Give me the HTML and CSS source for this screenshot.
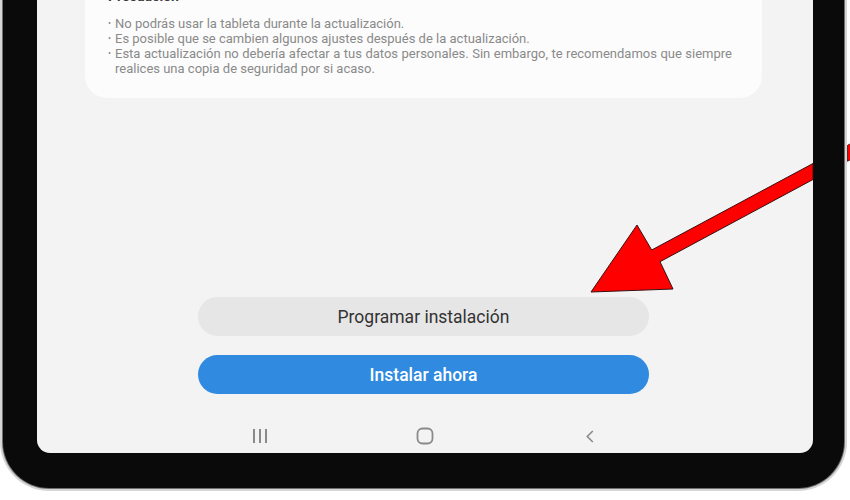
FILE: index.html
```html
<!DOCTYPE html>
<html lang="es">
<head>
<meta charset="utf-8">
<title>Actualización de software</title>
<link rel="stylesheet" href="styles.css">
</head>
<body>
<div class="device">
  <div class="screen">
    <div class="card">
      <div class="card-title">Precaución</div>
      <ul class="notes">
        <li><span>No podrás usar la tableta durante la actualización.</span></li>
        <li><span>Es posible que se cambien algunos ajustes después de la actualización.</span></li>
        <li><span>Esta actualización no debería afectar a tus datos personales. Sin embargo, te recomendamos que siempre realices una copia de seguridad por si acaso.</span></li>
      </ul>
    </div>
    <div class="actions">
      <button class="btn btn-secondary">Programar instalación</button>
      <button class="btn btn-primary">Instalar ahora</button>
    </div>
    <nav class="navbar">
      <span class="nav-item">
        <svg width="16" height="16" viewBox="0 0 16 16"><rect x="1" y="1" width="2" height="14" fill="#8a8a8a"/><rect x="7" y="1" width="2" height="14" fill="#8a8a8a"/><rect x="13" y="1" width="2" height="14" fill="#8a8a8a"/></svg>
      </span>
      <span class="nav-item">
        <svg width="18" height="18" viewBox="0 0 18 18"><rect x="1.5" y="1.5" width="15" height="15" rx="5" fill="none" stroke="#8a8a8a" stroke-width="1.8"/></svg>
      </span>
      <span class="nav-item">
        <svg width="8" height="13" viewBox="0 0 8 13"><path d="M6.8 1 L1.3 6.5 L6.8 12" fill="none" stroke="#8a8a8a" stroke-width="1.6"/></svg>
      </span>
    </nav>
  </div>
</div>
<svg class="arrow" width="850" height="500" viewBox="0 0 850 500">
  <polygon points="591,292 637,225 651.7,250 813,163.5 813,179.5 660,261.7 673,289" fill="#ff0000" stroke="#3a1010" stroke-width="1" stroke-linejoin="miter"/>
  <polygon points="847.5,145.3 851,143.4 851,159.4 847.5,161.3" fill="#ff0000" stroke="#3a1010" stroke-width="0.8"/>
</svg>
</body>
</html>
```
FILE: styles.css
```css
html, body {
  margin: 0;
  padding: 0;
}
body {
  width: 850px;
  height: 500px;
  overflow: hidden;
  background: #ffffff;
  position: relative;
  font-family: Roboto, "Noto Sans", "Liberation Sans", sans-serif;
}
.device {
  box-sizing: border-box;
  width: 841px;
  height: 568px;
  margin: -80px 0 0 3px;
  padding: 0 31px 35px 34px;
  background: #0a0a0a;
  border-radius: 0 0 46px 46px;
  box-shadow: 0 0 0 1px #6f6f6f, 0 0 0 3px #d6d6d6;
  display: flex;
}
.screen {
  flex: 1;
  display: flex;
  flex-direction: column;
  background: #f3f3f3;
  border-radius: 0 0 13px 13px;
}
.card {
  margin: 0 51px 0 48px;
  padding: 67px 30px 22px 23px;
  background: #fcfcfc;
  border-radius: 0 0 22px 22px;
}
.card-title {
  font-size: 14px;
  line-height: 18px;
  font-weight: 700;
  color: #3a3a3a;
  margin-bottom: 11px;
}
.notes {
  list-style: none;
  margin: 0;
  padding: 0;
  font-size: 13px;
  line-height: 15px;
  color: #8a8a8a;
  text-align: justify;
}
.notes li {
  display: flex;
}
.notes li::before {
  content: "•";
  flex: 0 0 7px;
  font-size: 9px;
}
.actions {
  margin-top: auto;
  padding-left: 161px;
  display: flex;
  flex-direction: column;
  gap: 19px;
}
.btn {
  width: 451px;
  height: 39px;
  border: none;
  border-radius: 20px;
  font-family: Roboto, "Noto Sans", "Liberation Sans", sans-serif;
  font-size: 17.5px;
  font-weight: 400;
  padding: 0;
  cursor: pointer;
}
.btn-secondary {
  background: #e6e6e6;
  color: #333333;
}
.btn-primary {
  background: #2f8ae0;
  color: #ffffff;
  font-weight: 500;
}
.navbar {
  height: 59px;
  box-sizing: border-box;
  padding-top: 34px;
  display: flex;
  justify-content: center;
  align-items: flex-start;
  gap: 125px;
}
.nav-item {
  width: 40px;
  height: 16px;
  display: flex;
  align-items: center;
  justify-content: center;
}
.arrow {
  position: absolute;
  top: 0;
  left: 0;
  pointer-events: none;
}
```
